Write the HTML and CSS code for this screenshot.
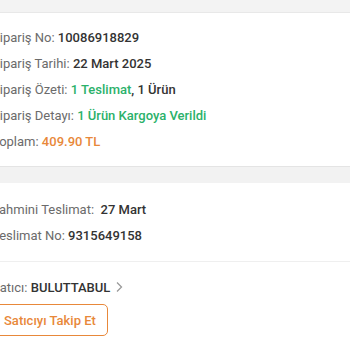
FILE: index.html
```html
<!DOCTYPE html>
<html lang="tr">
<head>
<meta charset="utf-8">
<link rel="stylesheet" href="styles.css">
</head>
<body>
<div class="topbar"></div>
<section class="block block-order">
  <div class="row"><span class="label">Sipariş No:</span> <span class="value">10086918829</span></div>
  <div class="row"><span class="label">Sipariş Tarihi:</span> <span class="value">22 Mart 2025</span></div>
  <div class="row"><span class="label">Sipariş Özeti:</span> <span class="value green">1 Teslimat</span><span class="value">, 1 Ürün</span></div>
  <div class="row"><span class="label">Sipariş Detayı:</span> <span class="value green">1 Ürün Kargoya Verildi</span></div>
  <div class="row"><span class="label">Toplam:</span> <span class="value orange">409.90 TL</span></div>
</section>
<div class="band"></div>
<section class="block block-delivery">
  <div class="row"><span class="label">Tahmini Teslimat:</span>&nbsp; <span class="value">27 Mart</span></div>
  <div class="row"><span class="label">Teslimat No:</span> <span class="value">9315649158</span></div>
</section>
<section class="block block-seller">
  <div class="row"><span class="label">Satıcı:</span> <span class="value">BULUTTABUL</span><svg class="chev" width="8" height="12" viewBox="0 0 8 12"><path d="M2 1.5 L6.5 6 L2 10.5" fill="none" stroke="#9a9a9a" stroke-width="1.3"/></svg></div>
  <button class="follow">Satıcıyı Takip Et</button>
</section>
</body>
</html>
```
FILE: styles.css
```css
html, body {
  margin: 0;
  padding: 0;
  background: #fff;
  font-family: Roboto, "Noto Sans", Arial, sans-serif;
  font-size: 13px;
}
.topbar {
  height: 12px;
  background: #f3f3f3;
  border-bottom: 1px solid #e8e8e8;
}
.block {
  margin-left: -8px;
}
.row {
  line-height: 26px;
  height: 26px;
  white-space: nowrap;
}
.label {
  color: #6b6b6b;
}
.value {
  color: #333;
  font-weight: 500;
}
.green { color: #2bb16a; }
.orange { color: #e8883a; }
.block-order {
  padding: 12px 0 11px;
}
.band {
  height: 16px;
  background: #f2f2f2;
  border-top: 1px solid #e4e4e4;
}
.block-delivery {
  padding: 14px 0 12px;
  border-bottom: 1px solid #efefef;
}
.block-seller {
  padding: 13px 0 0;
}
.chev {
  margin-left: 5px;
  vertical-align: -1px;
}
.follow {
  display: block;
  margin-top: 3px;
  height: 32px;
  padding: 0 11px;
  border: 1px solid #e8883a;
  border-radius: 5px;
  background: #fff;
  color: #e8883a;
  font-family: Roboto, "Noto Sans", Arial, sans-serif;
  font-size: 13px;
  font-weight: 500;
}
```
